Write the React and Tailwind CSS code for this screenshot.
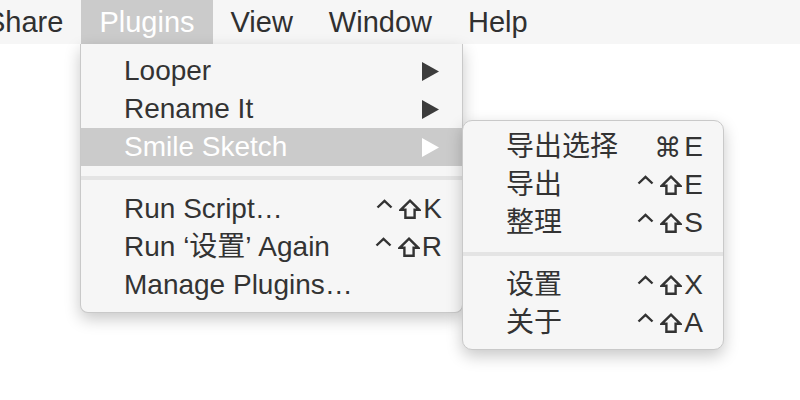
import React from "react";

const FONT = { fontFamily: '"Liberation Sans", "Noto Sans CJK SC", "DejaVu Sans", sans-serif' };

function Arrow({ white }) {
  return (
    <svg width="17" height="19" viewBox="0 0 17 19" className="shrink-0">
      <polygon points="0,0 17,9.5 0,19" fill={white ? "#ffffff" : "#3c3c3c"} />
    </svg>
  );
}

function Ctrl() {
  return (
    <svg width="17" height="20" viewBox="0 0 17 20" className="shrink-0">
      <polyline points="1.5,8.5 8.5,1.8 15.5,8.5" fill="none" stroke="currentColor" strokeWidth="2.4" />
    </svg>
  );
}

function Shift() {
  return (
    <svg width="22" height="20" viewBox="0 0 22 20" className="shrink-0">
      <polygon
        points="11,1.7 20.3,10.8 15.6,10.8 15.6,18.8 6.4,18.8 6.4,10.8 1.7,10.8"
        fill="none"
        stroke="currentColor"
        strokeWidth="2.4"
        strokeLinejoin="miter"
      />
    </svg>
  );
}

function Keys({ k, cmd }) {
  return (
    <span className="inline-flex items-center">
      {cmd ? (
        <span className="mr-[3px] text-[27px]" style={{ fontFamily: '"DejaVu Sans", sans-serif' }}>⌘</span>
      ) : (
        <>
          <Ctrl />
          <span className="w-[6px]" />
          <Shift />
          <span className="w-[2px]" />
        </>
      )}
      <span>{k}</span>
    </span>
  );
}

function Row({ label, shortcut, arrow, active }) {
  return (
    <div
      className={`flex h-[38px] items-center justify-between pl-[43px] ${arrow ? "pr-[23px]" : "pr-[20px]"} ${
        active ? "bg-[#cbcbcb] text-white" : "text-[#333333]"
      }`}
    >
      <span className="whitespace-nowrap">{label}</span>
      {arrow ? <Arrow white={active} /> : shortcut}
    </div>
  );
}

function Sep() {
  return (
    <div className="flex h-[24px] items-center">
      <div className="h-[4px] w-full bg-[#e4e4e4]" />
    </div>
  );
}

export default function App() {
  return (
    <div className="relative h-[400px] w-[800px] overflow-hidden bg-white text-[28px] leading-none" style={FONT}>
      <div className="flex h-[44px] items-center bg-[#f6f6f6] text-[29px] text-[#303030]">
        <div className="-ml-[32px] flex h-full items-center px-[18px]">Share</div>
        <div className="flex h-full items-center bg-[#cbcbcb] px-[18px] text-white">Plugins</div>
        <div className="flex h-full items-center px-[18px]">View</div>
        <div className="flex h-full items-center px-[18px]">Window</div>
        <div className="flex h-full items-center px-[18px]">Help</div>
      </div>

      <div className="absolute left-[80px] top-[44px] w-[383px] rounded-b-[8px] border border-t-0 border-[#c9c9c9] bg-[#f6f6f6] py-[8px] shadow-[0_6px_16px_rgba(0,0,0,0.22)]">
        <Row label="Looper" arrow />
        <Row label="Rename It" arrow />
        <Row label="Smile Sketch" arrow active />
        <Sep />
        <Row label="Run Script…" shortcut={<Keys k="K" />} />
        <Row label="Run ‘设置’ Again" shortcut={<Keys k="R" />} />
        <Row label="Manage Plugins…" shortcut={null} />
      </div>

      <div className="absolute left-[462px] top-[120px] w-[262px] rounded-[10px] border border-[#c9c9c9] bg-[#f6f6f6] py-[7px] shadow-[0_6px_16px_rgba(0,0,0,0.22)]">
        <Row label="导出选择" shortcut={<Keys k="E" cmd />} />
        <Row label="导出" shortcut={<Keys k="E" />} />
        <Row label="整理" shortcut={<Keys k="S" />} />
        <Sep />
        <Row label="设置" shortcut={<Keys k="X" />} />
        <Row label="关于" shortcut={<Keys k="A" />} />
      </div>
    </div>
  );
}
